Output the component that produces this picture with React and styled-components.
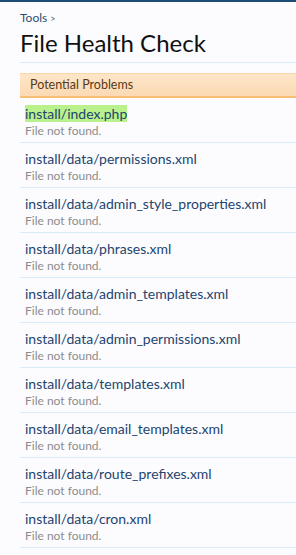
import React from 'react'
import styled, { createGlobalStyle } from "styled-components";

const files = [
  "install/index.php",
  "install/data/permissions.xml",
  "install/data/admin_style_properties.xml",
  "install/data/phrases.xml",
  "install/data/admin_templates.xml",
  "install/data/admin_permissions.xml",
  "install/data/templates.xml",
  "install/data/email_templates.xml",
  "install/data/route_prefixes.xml",
  "install/data/cron.xml",
];

const Global = createGlobalStyle`
  body {
    margin: 0;
    background: #fcfcff;
    font-family: Lato, "Open Sans", sans-serif;
    overflow: hidden;
  }
`;

function App() {
  return (
    <Page>
      <Global />
      <Content>
        <Crumbs>Tools <Arrow>&gt;</Arrow></Crumbs>
        <Title>File Health Check</Title>
        <Section>
          <SectionHead>Potential Problems</SectionHead>
          {files.map((f, i) => (
            <Row key={f}>
              <FileName $hl={i === 0}>{f}</FileName>
              <Status>File not found.</Status>
            </Row>
          ))}
        </Section>
      </Content>
    </Page>
  );
}

const Page = styled.div`
  border-top: 2px solid #1d4c78;
  width: 296px;
  height: 553px;
  overflow: hidden;
`;

const Content = styled.div`
  padding-left: 20px;
  width: 400px;
`;

const Crumbs = styled.div`
  padding-top: 9px;
  font-size: 12px;
  line-height: 14px;
  color: #2b4d72;
`;

const Arrow = styled.span`
  font-size: 9px;
  color: #555;
`;

const Title = styled.h1`
  margin: 0;
  font-size: 24px;
  font-weight: normal;
  line-height: 34px;
  color: #111;
  padding-bottom: 2px;
  border-bottom: 1px solid #d7ebf9;
`;

const Section = styled.div`
  margin-top: 10px;
`;

const SectionHead = styled.div`
  height: 22px;
  line-height: 22px;
  padding-left: 10px;
  font-size: 12.5px;
  color: #5a3a14;
  border-top: 1px solid #f9d7ab;
  border-bottom: 2px solid #f8bf74;
  background: linear-gradient(#fee6c9, #fbd9b3);
`;

const Row = styled.div`
  padding: 5px 5px;
  height: 34px;
  border-bottom: 1px solid #d7ebf9;
`;

const FileName = styled.div`
  display: inline-block;
  font-size: 14px;
  line-height: 17px;
  color: #23446e;
  background: ${(p) => (p.$hl ? "#b9f28c" : "transparent")};
`;

const Status = styled.div`
  font-size: 12px;
  line-height: 17px;
  color: #8c8c8c;
`;

export default App
